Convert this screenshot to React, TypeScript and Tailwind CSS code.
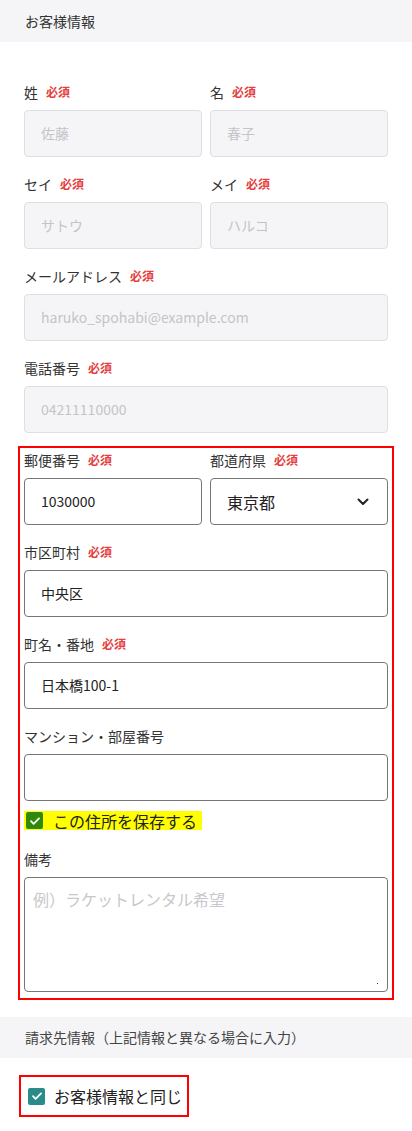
import React from 'react';

const font = { fontFamily: '"Noto Sans CJK JP", "Noto Sans", sans-serif' };

function Required() {
  return <span className="ml-2 text-[12px] font-bold text-[#e53e3e]">必須</span>;
}

function Label({ text, required }: { text: string; required?: boolean }) {
  return (
    <div className="flex h-5 items-center text-[14px] text-[#333]">
      <span>{text}</span>
      {required && <Required />}
    </div>
  );
}

function ReadOnlyField({ label, placeholder }: { label: string; placeholder: string }) {
  return (
    <div className="flex min-w-0 flex-1 flex-col">
      <Label text={label} required />
      <div className="mt-2 flex h-[47px] items-center rounded-[4px] border border-[#dedee3] bg-[#f5f5f7] px-4 text-[14px] text-[#c4c4c8]">
        {placeholder}
      </div>
    </div>
  );
}

function TextField({ label, value, required }: { label: string; value: string; required?: boolean }) {
  return (
    <div className="flex min-w-0 flex-1 flex-col">
      <Label text={label} required={required} />
      <div className="mt-2 flex h-[47px] items-center rounded-[4px] border border-[#767676] bg-white px-4 text-[14px] text-[#222]">
        {value}
      </div>
    </div>
  );
}

function Check({ color }: { color: string }) {
  return (
    <span className={`flex h-[17px] w-[17px] shrink-0 items-center justify-center rounded-[2px] ${color}`}>
      <svg width="12" height="12" viewBox="0 0 12 12" fill="none">
        <path d="M2 6.2l2.6 2.6L10 3.4" stroke="#fff" strokeWidth="1.8" strokeLinecap="round" strokeLinejoin="round" />
      </svg>
    </span>
  );
}

export default function App() {
  return (
    <div className="min-h-[1131px] w-[412px] bg-white" style={font}>
      {/* お客様情報 */}
      <div className="flex h-[42px] items-center bg-[#f5f5f7] px-[25px] text-[14px] text-[#333]">お客様情報</div>

      <div className="flex flex-col px-6 pt-10">
        <div className="flex gap-2">
          <ReadOnlyField label="姓" placeholder="佐藤" />
          <ReadOnlyField label="名" placeholder="春子" />
        </div>
        <div className="mt-[17px] flex gap-2">
          <ReadOnlyField label="セイ" placeholder="サトウ" />
          <ReadOnlyField label="メイ" placeholder="ハルコ" />
        </div>
        <div className="mt-[17px]">
          <ReadOnlyField label="メールアドレス" placeholder="haruko_spohabi@example.com" />
        </div>
        <div className="mt-[17px]">
          <ReadOnlyField label="電話番号" placeholder="04211110000" />
        </div>
      </div>

      {/* 住所 */}
      <div className="mx-[18px] mt-[13px] flex flex-col border-2 border-[#ff0000] px-1 pt-[2px] pb-[6px]">
        <div className="flex gap-2">
          <TextField label="郵便番号" value="1030000" required />
          <div className="flex min-w-0 flex-1 flex-col">
            <Label text="都道府県" required />
            <div className="mt-2 flex h-[47px] items-center justify-between rounded-[4px] border border-[#767676] bg-white pr-[18px] pl-4 text-[16px] text-[#222]">
              <span>東京都</span>
              <svg width="12" height="8" viewBox="0 0 12 8" fill="none">
                <path d="M1.5 1.5L6 6l4.5-4.5" stroke="#222" strokeWidth="2" strokeLinecap="round" strokeLinejoin="round" />
              </svg>
            </div>
          </div>
        </div>
        <div className="mt-[17px]">
          <TextField label="市区町村" value="中央区" required />
        </div>
        <div className="mt-[17px]">
          <TextField label="町名・番地" value="日本橋100-1" required />
        </div>
        <div className="mt-[17px]">
          <TextField label="マンション・部屋番号" value="" />
        </div>
        <div className="mt-[10px] flex">
          <label className="flex h-[19px] items-center gap-[10px] bg-[#ffff00] pr-[5px] pl-[2px] text-[16px] text-[#222]">
            <Check color="bg-[#2f8a0a]" />
            <span>この住所を保存する</span>
          </label>
        </div>
        <div className="mt-[19px]">
          <Label text="備考" />
          <div className="relative mt-2 h-[115px] rounded-[4px] border border-[#767676] bg-white px-2 pt-[9px] text-[16px] text-[#c8c8cc]">
            例）ラケットレンタル希望
            <span className="absolute right-[9px] bottom-[7px] h-[1px] w-[1px] bg-[#333]" />
          </div>
        </div>
      </div>

      {/* 請求先情報 */}
      <div className="mt-[17px] flex h-[41px] items-center bg-[#f5f5f7] px-[25px] text-[14px] text-[#444]">
        請求先情報（上記情報と異なる場合に入力）
      </div>
      <div className="px-[19px] pt-[17px]">
        <label className="flex h-[42px] w-[170px] items-center gap-[9px] border-2 border-[#ff0000] pl-[7px] text-[16px] text-[#222]">
          <Check color="bg-[#2a8c88]" />
          <span>お客様情報と同じ</span>
        </label>
      </div>
    </div>
  );
}
